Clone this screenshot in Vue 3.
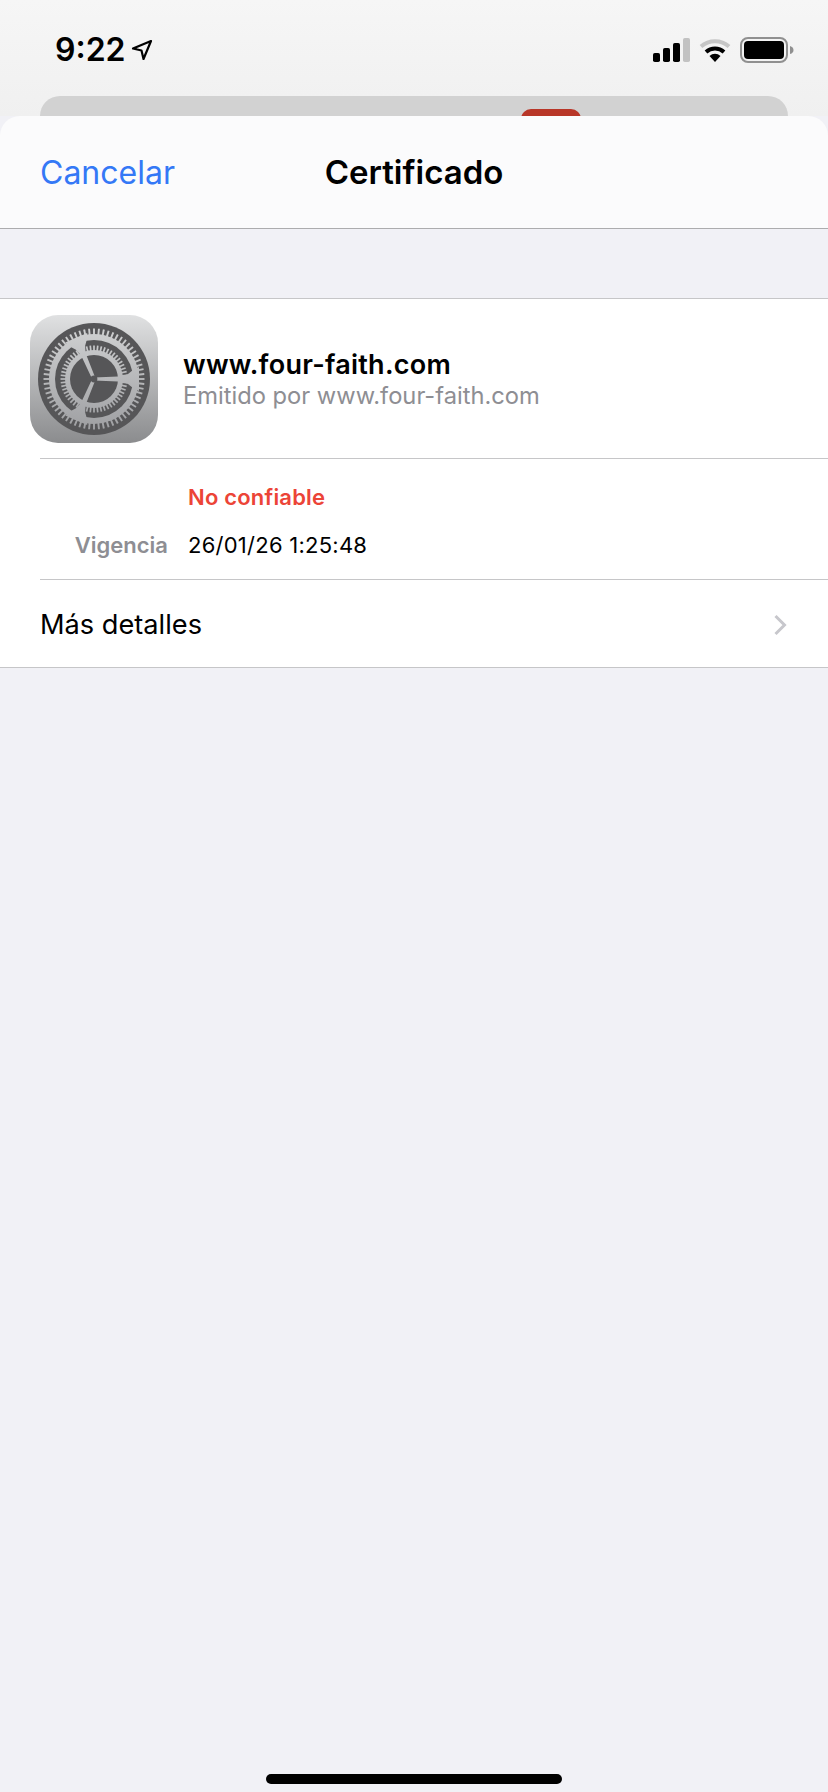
<script setup>
const cx = 64, cy = 64;
const ticks = (n, r1, r2) => {
  const out = [];
  for (let i = 0; i < n; i++) {
    const a = (i / n) * Math.PI * 2;
    out.push({
      x1: (cx + r1 * Math.cos(a)).toFixed(2),
      y1: (cy + r1 * Math.sin(a)).toFixed(2),
      x2: (cx + r2 * Math.cos(a)).toFixed(2),
      y2: (cy + r2 * Math.sin(a)).toFixed(2),
    });
  }
  return out;
};
const outerTicks = ticks(64, 44, 50.5);
const innerTicks = ticks(56, 28, 33.5);
const spoke = (deg) => {
  const a = (deg * Math.PI) / 180;
  const ux = Math.cos(a), uy = Math.sin(a);
  const px = -uy, py = ux;
  const prof = [[0, 1.6], [24, 2.4], [29, 3.2], [34, 5], [39, 9], [45, 12]];
  const pt = (r, w) => `${(cx + ux * r + px * w).toFixed(2)},${(cy + uy * r + py * w).toFixed(2)}`;
  const side1 = prof.map(([r, w]) => pt(r, w));
  const side2 = prof.slice().reverse().map(([r, w]) => pt(r, -w));
  return side1.concat(side2).join(' ');
};
const spokes = [0, 113.3, -113.3].map(spoke);
</script>

<template>
  <div class="screen">
    <div class="backdrop">
      <div class="status">
        <div class="time">
          <span>9:22</span>
          <svg class="loc" width="22" height="22" viewBox="0 0 22 22">
            <path d="M20 2 L2 9.5 L10.5 11.5 L12.5 20 Z" fill="none" stroke="#000" stroke-width="2.2" stroke-linejoin="round" />
          </svg>
        </div>
        <div class="indicators">
          <svg width="37" height="24" viewBox="0 0 37 24">
            <rect x="0" y="15" width="7" height="9" rx="1.8" fill="#000" />
            <rect x="10" y="10" width="7" height="14" rx="1.8" fill="#000" />
            <rect x="20" y="5" width="7" height="19" rx="1.8" fill="#000" />
            <rect x="30" y="0" width="7" height="24" rx="1.8" fill="#c2c2c2" />
          </svg>
          <svg width="32" height="24" viewBox="0 0 32 24">
            <path d="M2 8.5 A21 21 0 0 1 30 8.5" fill="none" stroke="#c6c6c6" stroke-width="4" />
            <path d="M7 14 A13.5 13.5 0 0 1 25 14" fill="none" stroke="#000" stroke-width="4" />
            <path d="M16 24 L10.5 18 A8 8 0 0 1 21.5 18 Z" fill="#000" />
          </svg>
          <svg width="54" height="26" viewBox="0 0 54 26">
            <rect x="1" y="1" width="46" height="24" rx="7" fill="none" stroke="#909090" stroke-width="2" />
            <rect x="4" y="4" width="40" height="18" rx="4" fill="#000" />
            <path d="M50 9 Q53.5 10 53.5 13 Q53.5 16 50 17 Z" fill="#909090" />
          </svg>
        </div>
      </div>
      <div class="peek"><div class="peek-tab"></div></div>
    </div>

    <div class="sheet">
      <header class="nav">
        <span class="cancel">Cancelar</span>
        <span class="title">Certificado</span>
      </header>

      <section class="group">
        <div class="summary">
          <div class="app-icon">
            <svg width="128" height="128" viewBox="0 0 128 128">
              <defs>
                <linearGradient id="iconBg" x1="0" y1="0" x2="0" y2="1">
                  <stop offset="0" stop-color="#e0e1e2" />
                  <stop offset="1" stop-color="#8b8c8e" />
                </linearGradient>
                <linearGradient id="gearLight" gradientUnits="userSpaceOnUse" x1="0" y1="8" x2="0" y2="120">
                  <stop offset="0" stop-color="#d2d3d4" />
                  <stop offset="1" stop-color="#9c9da0" />
                </linearGradient>
              </defs>
              <rect width="128" height="128" rx="28" fill="url(#iconBg)" />
              <circle cx="64" cy="64" r="56" fill="#565658" />
              <g stroke="url(#gearLight)" stroke-width="1.9">
                <line v-for="(t, i) in outerTicks" :key="'o' + i" :x1="t.x1" :y1="t.y1" :x2="t.x2" :y2="t.y2" />
              </g>
              <circle cx="64" cy="64" r="45" fill="url(#gearLight)" />
              <circle cx="64" cy="64" r="39" fill="#565658" />
              <g stroke="url(#gearLight)" stroke-width="1.7">
                <line v-for="(t, i) in innerTicks" :key="'i' + i" :x1="t.x1" :y1="t.y1" :x2="t.x2" :y2="t.y2" />
              </g>
              <circle cx="64" cy="64" r="29" fill="url(#gearLight)" />
              <circle cx="64" cy="64" r="24" fill="#565658" />
              <polygon v-for="(p, i) in spokes" :key="'s' + i" :points="p" fill="url(#gearLight)" />
              <circle cx="64" cy="64" r="3.4" fill="#565658" />
            </svg>
          </div>
          <div class="summary-text">
            <div class="host">www.four-faith.com</div>
            <div class="issuer">Emitido por www.four-faith.com</div>
          </div>
        </div>

        <div class="facts">
          <div class="fact">
            <span class="fact-label"></span>
            <span class="untrusted">No confiable</span>
          </div>
          <div class="fact">
            <span class="fact-label">Vigencia</span>
            <span class="fact-value">26/01/26 1:25:48</span>
          </div>
        </div>

        <div class="more">
          <span>Más detalles</span>
          <svg width="14" height="22" viewBox="0 0 14 22">
            <path d="M2.5 2 L11.5 11 L2.5 20" fill="none" stroke="#c7c7cc" stroke-width="3" />
          </svg>
        </div>
      </section>

      <div class="spacer"><div class="home-bar"></div></div>
    </div>
  </div>
</template>

<style scoped>
.screen {
  width: 828px;
  height: 1792px;
  display: flex;
  flex-direction: column;
  overflow: hidden;
  background: #f1f1f6;
  font-family: Inter, "Liberation Sans", sans-serif;
  color: #000;
}
.backdrop {
  height: 116px;
  flex: none;
  background: linear-gradient(#f6f6f6, #f0f0f0);
  display: flex;
  flex-direction: column;
}
.status {
  height: 96px;
  box-sizing: border-box;
  padding: 30px 34px 0 55px;
  display: flex;
  justify-content: space-between;
  align-items: flex-start;
}
.time {
  display: flex;
  align-items: center;
  gap: 5px;
  font-size: 32px;
  line-height: 40px;
  font-weight: 600;
}
.indicators {
  display: flex;
  align-items: center;
  gap: 9px;
  padding-top: 7px;
}
.peek {
  height: 20px;
  margin: 0 40px;
  background: #d2d2d2;
  border-radius: 20px 20px 0 0;
  padding-top: 13px;
  box-sizing: border-box;
  overflow: hidden;
}
.peek-tab {
  width: 60px;
  height: 20px;
  margin-left: 481px;
  border-radius: 10px;
  background: #b83628;
}
.sheet {
  flex: 1;
  display: flex;
  flex-direction: column;
  min-height: 0;
  border-radius: 20px 20px 0 0;
  background: #f1f1f6;
  overflow: hidden;
}
.nav {
  height: 113px;
  flex: none;
  box-sizing: border-box;
  background: #fbfbfc;
  border-bottom: 1px solid #acacae;
  display: grid;
  grid-template-columns: 1fr auto 1fr;
  align-items: center;
  padding: 0 40px;
}
.cancel {
  font-size: 32px;
  color: #3478f6;
}
.title {
  font-size: 33px;
  font-weight: 600;
}
.group {
  margin-top: 69px;
  background: #fff;
  border-top: 1px solid #c6c6c8;
  border-bottom: 1px solid #c6c6c8;
}
.summary {
  height: 159px;
  box-sizing: border-box;
  padding: 16px 0 0 30px;
  display: flex;
  gap: 25px;
}
.app-icon {
  width: 128px;
  height: 128px;
  flex: none;
}
.summary-text {
  padding-top: 34px;
}
.host {
  font-size: 27px;
  line-height: 32px;
  font-weight: 600;
  letter-spacing: 0.25px;
}
.issuer {
  font-size: 23.7px;
  line-height: 30px;
  color: #8e8e93;
}
.facts {
  margin-left: 40px;
  height: 122px;
  box-sizing: border-box;
  border-top: 1px solid #c6c6c8;
  border-bottom: 1px solid #c6c6c8;
  padding-top: 23px;
  display: flex;
  flex-direction: column;
  gap: 18px;
}
.fact {
  display: grid;
  grid-template-columns: 128px 1fr;
  column-gap: 20px;
  font-size: 22px;
  line-height: 30px;
}
.fact-label {
  text-align: right;
  color: #8e8e93;
  font-weight: 600;
}
.untrusted {
  color: #ec4437;
  font-weight: 600;
  letter-spacing: 0.2px;
}
.fact-value {
  letter-spacing: 0.25px;
}
.more {
  height: 87px;
  box-sizing: border-box;
  padding: 2px 41px 0 40px;
  display: flex;
  justify-content: space-between;
  align-items: center;
  font-size: 27.2px;
}
.spacer {
  flex: 1;
  display: flex;
  flex-direction: column;
  justify-content: flex-end;
  align-items: center;
  padding-bottom: 8px;
}
.home-bar {
  width: 296px;
  height: 10px;
  border-radius: 5px;
  background: #000;
}
</style>
